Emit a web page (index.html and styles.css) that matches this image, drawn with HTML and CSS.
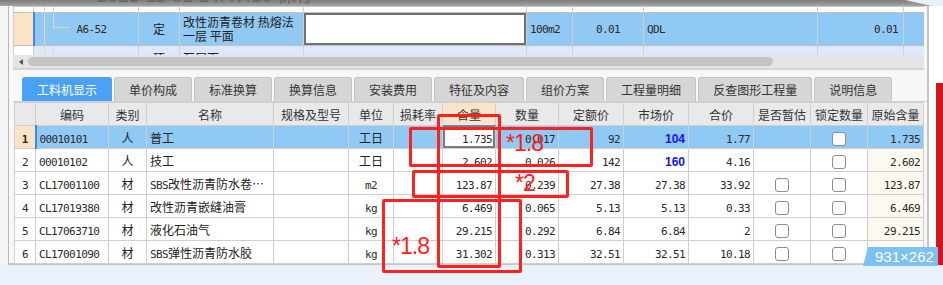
FILE: index.html
```html
<!DOCTYPE html>
<html lang="zh-CN">
<head>
  <meta charset="UTF-8" />
  <meta name="viewport" content="width=device-width, initial-scale=1.0"/>
  <title>工料机显示</title>
  <link rel="stylesheet" href="styles.css">
</head>
<body>
  <div class="page">
    <!-- 上方被截掉的标题栏 -->
    <div class="title-band"><span class="saved">2023-11-01 14:47:10 保存</span></div>

    <div class="middle">
      <div class="gutter"></div>

      <div class="window">
        <!-- 清单/定额表格（只露出一部分） -->
        <div class="upper">
          <table class="grid upper-grid">
            <colgroup>
              <col style="width:20px"><col style="width:105px"><col style="width:41px"><col style="width:124px">
              <col style="width:223px"><col style="width:46px"><col style="width:71px"><col style="width:174px">
              <col style="width:86px"><col style="width:21px">
            </colgroup>
            <tr class="row-prev">
              <td></td><td class="tree"></td><td></td><td></td><td></td><td></td><td></td><td></td><td></td><td></td>
            </tr>
            <tr class="row-cur">
              <td class="rn"></td>
              <td class="tree tree-end code-cell"><span class="mono">A6-52</span></td>
              <td class="c">定</td>
              <td class="name2">改性沥青卷材 热熔法<br>一层 平面</td>
              <td class="edit"></td>
              <td><span class="mono">100m2</span></td>
              <td class="c"><span class="mono">0.01</span></td>
              <td><span class="mono">QDL</span></td>
              <td class="r pad-r"><span class="mono">0.01</span></td>
              <td></td>
            </tr>
            <tr class="row-next">
              <td class="rn-plain"><span class="mono">53</span></td>
              <td class="tree code-cell"><span class="mono grey">010001001···</span></td>
              <td class="c">项</td>
              <td>瓦屋面</td>
              <td></td>
              <td><span class="mono">0</span></td>
              <td></td>
              <td><span class="mono">1</span></td>
              <td class="r pad-r"><span class="mono">1</span></td>
              <td></td>
            </tr>
          </table>
        </div>

        <div class="hscroll">
          <span class="arrow"></span>
          <span class="thumb"></span>
        </div>

        <div class="tabs">
          <div class="tab active">工料机显示</div>
          <div class="tab">单价构成</div>
          <div class="tab">标准换算</div>
          <div class="tab">换算信息</div>
          <div class="tab">安装费用</div>
          <div class="tab">特征及内容</div>
          <div class="tab">组价方案</div>
          <div class="tab">工程量明细</div>
          <div class="tab">反查图形工程量</div>
          <div class="tab">说明信息</div>
        </div>

        <!-- 工料机明细 -->
        <table class="grid lower-grid">
          <colgroup>
            <col style="width:21px"><col style="width:73px"><col style="width:38px"><col style="width:127px">
            <col style="width:75px"><col style="width:45px"><col style="width:49px"><col style="width:53px">
            <col style="width:63px"><col style="width:65px"><col style="width:65px"><col style="width:65px">
            <col style="width:57px"><col style="width:57px"><col style="width:56px">
          </colgroup>
          <tr class="head">
            <th></th><th>编码</th><th>类别</th><th>名称</th><th>规格及型号</th><th>单位</th><th>损耗率</th>
            <th class="hot">含量</th><th>数量</th><th>定额价</th><th>市场价</th><th>合价</th>
            <th>是否暂估</th><th>锁定数量</th><th>原始含量</th>
          </tr>
          <tr class="sel">
            <td class="rn c"><span class="mono b">1</span></td>
            <td class="first"><span class="mono">00010101</span></td>
            <td class="c">人</td>
            <td>普工</td>
            <td></td>
            <td class="c">工日</td>
            <td></td>
            <td class="r edit"><span class="mono">1.735</span></td>
            <td class="r"><span class="mono">0.017</span></td>
            <td class="r"><span class="mono">92</span></td>
            <td class="r"><span class="price">104</span></td>
            <td class="r"><span class="mono">1.77</span></td>
            <td></td>
            <td class="c"><span class="chk"></span></td>
            <td class="r"><span class="mono">1.735</span></td>
          </tr>
          <tr>
            <td class="c"><span class="mono">2</span></td>
            <td><span class="mono">00010102</span></td>
            <td class="c">人</td>
            <td>技工</td>
            <td></td>
            <td class="c">工日</td>
            <td></td>
            <td class="r"><span class="mono">2.602</span></td>
            <td class="r"><span class="mono">0.026</span></td>
            <td class="r"><span class="mono">142</span></td>
            <td class="r"><span class="price">160</span></td>
            <td class="r"><span class="mono">4.16</span></td>
            <td></td>
            <td class="c"><span class="chk"></span></td>
            <td class="r orig"><span class="mono">2.602</span></td>
          </tr>
          <tr>
            <td class="c"><span class="mono">3</span></td>
            <td><span class="mono">CL17001100</span></td>
            <td class="c">材</td>
            <td><span class="mono">SBS</span>改性沥青防水卷…</td>
            <td></td>
            <td class="c"><span class="mono">m2</span></td>
            <td></td>
            <td class="r"><span class="mono">123.87</span></td>
            <td class="r"><span class="mono">0.239</span></td>
            <td class="r"><span class="mono">27.38</span></td>
            <td class="r"><span class="mono">27.38</span></td>
            <td class="r"><span class="mono">33.92</span></td>
            <td class="c"><span class="chk"></span></td>
            <td class="c"><span class="chk"></span></td>
            <td class="r orig"><span class="mono">123.87</span></td>
          </tr>
          <tr>
            <td class="c"><span class="mono">4</span></td>
            <td><span class="mono">CL17019380</span></td>
            <td class="c">材</td>
            <td>改性沥青嵌缝油膏</td>
            <td></td>
            <td class="c"><span class="mono">kg</span></td>
            <td></td>
            <td class="r"><span class="mono">6.469</span></td>
            <td class="r"><span class="mono">0.065</span></td>
            <td class="r"><span class="mono">5.13</span></td>
            <td class="r"><span class="mono">5.13</span></td>
            <td class="r"><span class="mono">0.33</span></td>
            <td class="c"><span class="chk"></span></td>
            <td class="c"><span class="chk"></span></td>
            <td class="r orig"><span class="mono">6.469</span></td>
          </tr>
          <tr>
            <td class="c"><span class="mono">5</span></td>
            <td><span class="mono">CL17063710</span></td>
            <td class="c">材</td>
            <td>液化石油气</td>
            <td></td>
            <td class="c"><span class="mono">kg</span></td>
            <td></td>
            <td class="r"><span class="mono">29.215</span></td>
            <td class="r"><span class="mono">0.292</span></td>
            <td class="r"><span class="mono">6.84</span></td>
            <td class="r"><span class="mono">6.84</span></td>
            <td class="r"><span class="mono">2</span></td>
            <td class="c"><span class="chk"></span></td>
            <td class="c"><span class="chk"></span></td>
            <td class="r orig"><span class="mono">29.215</span></td>
          </tr>
          <tr>
            <td class="c"><span class="mono">6</span></td>
            <td><span class="mono">CL17001090</span></td>
            <td class="c">材</td>
            <td><span class="mono">SBS</span>弹性沥青防水胶</td>
            <td></td>
            <td class="c"><span class="mono">kg</span></td>
            <td></td>
            <td class="r"><span class="mono">31.302</span></td>
            <td class="r"><span class="mono">0.313</span></td>
            <td class="r"><span class="mono">32.51</span></td>
            <td class="r"><span class="mono">32.51</span></td>
            <td class="r"><span class="mono">10.18</span></td>
            <td class="c"><span class="chk"></span></td>
            <td class="c"><span class="chk"></span></td>
            <td class="r orig"><span class="mono">31.302</span></td>
          </tr>
        </table>
      </div>

      <div class="side">
        <div class="side-top"><span class="side-char">含</span></div>
        <div class="side-red"><span class="notch"></span></div>
      </div>
    </div>

    <div class="bottom"></div>

    <!-- 红色批注 -->
    <div class="mark mark-col"></div>
    <div class="mark mark-r12"></div>
    <div class="mark mark-r3"></div>
    <div class="mark mark-r456"></div>
    <div class="note note-1">*1.8</div>
    <div class="note note-2">*2</div>
    <div class="note note-3">*1.8</div>

    <div class="badge">931×262</div>
  </div>
</body>
</html>
```

FILE: styles.css
```css
html, body {
  margin: 0;
  padding: 0;
}

body {
  width: 943px;
  height: 285px;
  overflow: hidden;
  background: #eaf1fa;
  font-family: "Noto Sans CJK SC", sans-serif;
  font-size: 12px;
  color: #222;
}

.page {
  position: relative;
  width: 943px;
  height: 285px;
}

.title-band {
  height: 6px;
  overflow: hidden;
  background: linear-gradient(#7c7c7c, #a4a4a4);
  clip-path: polygon(0 0, 905px 0, 932px 100%, 0 100%);
}

.saved {
  display: block;
  margin: -15px 0 0 97px;
  font-family: "Liberation Sans", sans-serif;
  font-size: 19px;
  line-height: 22px;
  color: #666;
}

.middle {
  display: flex;
  height: 259px;
  background: #fff;
}

.gutter {
  width: 8px;
  background: #f4f5f7;
}

.window {
  width: 914px;
  padding-left: 4px;
  border-left: 1px solid #b8b8b8;
  border-right: 2px solid #c6c6c6;
  border-bottom: 2px solid #c6c6c6;
  background: #f7f7f7;
}

.side {
  width: 14px;
  display: flex;
  flex-direction: column;
  background: #fff;
}

.side-top {
  height: 77px;
  overflow: hidden;
}

.side-char {
  display: block;
  margin: 82px 0 0 9px;
  color: #999;
}

.side-red {
  flex: 1;
  margin-left: 7px;
  background: #d3141c;
}

.bottom {
  height: 20px;
}

/* 表格通用 */
.grid {
  border-collapse: collapse;
  table-layout: fixed;
  background: #fff;
}

.grid td, .grid th {
  padding: 0 3px;
  border: 1px solid #cfcfcf;
  white-space: nowrap;
  overflow: hidden;
  vertical-align: middle;
  text-align: left;
}

.mono {
  font-family: "DejaVu Sans Mono", monospace;
  font-size: 11px;
  letter-spacing: -0.6px;
  color: #2a2a2a;
}

.b {
  font-weight: bold;
}

.grey {
  color: #555;
}

.c { text-align: center !important; }
.r { text-align: right !important; }
.pad-r { padding-right: 5px !important; }

/* 上半部分 */
.upper {
  width: 911px;
  height: 49px;
  overflow: hidden;
  background: #fff;
}

.upper-grid {
  width: 911px;
}

.upper-grid td {
  border-top-color: #c2c2c2;
  border-bottom-color: #c2c2c2;
}

.row-prev td {
  height: 5px;
  line-height: 0;
}

.row-cur td {
  height: 32px;
  background: #91c9f5;
  line-height: 14px;
}

.row-cur td.rn {
  background: #fde3c6;
}

.row-next td {
  height: 22px;
  background: #dde9fb;
}

.row-next td.rn-plain {
  background: #fff;
  text-align: center;
}

/* 树形连线 */
.upper-grid td.tree {
  background-image:
    linear-gradient(#f6d2a8, #f6d2a8),
    linear-gradient(#f6d2a8, #f6d2a8);
  background-repeat: no-repeat;
  background-position: 10px 0, 19px 0;
  background-size: 1px 100%, 1px 100%;
}

.upper-grid tr.row-cur td.tree-end {
  border-left: 2px solid #3a8de2;
  background-image:
    linear-gradient(#f6d2a8, #f6d2a8),
    linear-gradient(#f6d2a8, #f6d2a8),
    linear-gradient(#f6d2a8, #f6d2a8);
  background-repeat: no-repeat;
  background-position: 9px 0, 18px 0, 18px 14px;
  background-size: 1px 100%, 1px 15px, 16px 1px;
}

.code-cell {
  padding-left: 42px !important;
}

.row-next .code-cell {
  padding-left: 30px !important;
}

.name2 {
  white-space: normal !important;
}

.row-cur .edit {
  background: #fff;
  box-shadow: inset 0 0 0 2px #707070;
}

/* 横向滚动条 */
.hscroll {
  display: flex;
  align-items: center;
  width: 911px;
  height: 13px;
  background: #e4e4e4;
  border-bottom: 2px solid #d5d5d5;
}

.arrow {
  width: 0;
  height: 0;
  margin-left: 6px;
  border-top: 3px solid transparent;
  border-bottom: 3px solid transparent;
  border-right: 4px solid #555;
}

.thumb {
  width: 745px;
  height: 9px;
  margin-left: 5px;
  border-radius: 5px;
  background: #c4c4c4;
}

/* 页签 */
.tabs {
  display: flex;
  gap: 2px;
  height: 24px;
  margin-top: 7px;
  padding-left: 9px;
  border-bottom: 1px solid #d0d0d0;
}

.tab {
  padding: 0 14px;
  line-height: 23px;
  background: #d6d6d6;
  border: 1px solid #c4c4c4;
  border-bottom: none;
  border-radius: 3px 3px 0 0;
  color: #333;
}

.tab.active {
  background: #4ba1f6;
  border-color: #4ba1f6;
  color: #fff;
}

/* 工料机表格 */
.lower-grid {
  width: 910px;
  margin-left: 1px;
}

.lower-grid th {
  height: 22px;
  background: #e9e9e9;
  font-weight: normal;
  text-align: center;
  color: #333;
}

.lower-grid th.hot {
  background: #fde4c6;
  border-bottom: 1px solid #4a90e2;
}

.lower-grid td {
  height: 22px;
}

.lower-grid tr.sel td {
  background: #91c9f5;
}

.lower-grid tr.sel td.rn {
  background: #fde3c6;
}

.lower-grid tr.sel td.first {
  border-left: 2px solid #3a8de2;
}

.lower-grid tr.sel td.edit {
  background: #fff;
  box-shadow: inset 0 0 0 2px #7a7a7a;
}

.lower-grid td.orig {
  background: #fdf9f1;
}

.price {
  font-family: "Liberation Sans", sans-serif;
  font-weight: bold;
  font-size: 12px;
  color: #1212f0;
}

.chk {
  display: inline-block;
  width: 12px;
  height: 12px;
  border: 1px solid #8c8c8c;
  border-radius: 3px;
  background: #fff;
  vertical-align: middle;
}

/* 红色批注（覆盖在截图上） */
.mark {
  position: absolute;
  border: 3px solid #ff2020;
  border-radius: 2px;
  box-sizing: border-box;
}

.mark-col  { left: 437px; top: 114px; width: 64px;  height: 154px; }
.mark-r12  { left: 409px; top: 127px; width: 184px; height: 40px; }
.mark-r3   { left: 412px; top: 170px; width: 157px; height: 28px; }
.mark-r456 { left: 382px; top: 199px; width: 140px; height: 74px; }

.note {
  position: absolute;
  font-family: "Liberation Sans", sans-serif;
  font-size: 23px;
  line-height: 23px;
  letter-spacing: -1px;
  color: #ff2020;
}

.note-1 { left: 506px; top: 132px; }
.note-2 { left: 515px; top: 172px; }
.note-3 { left: 392px; top: 235px; }

.badge {
  position: absolute;
  left: 863px;
  top: 247px;
  width: 75px;
  height: 19px;
  padding-left: 12px;
  box-sizing: border-box;
  background: #7cc2f0;
  clip-path: polygon(5px 0, 100% 0, 100% 100%, 0 100%);
  font-family: "Liberation Sans", sans-serif;
  font-size: 15px;
  line-height: 19px;
  color: #fff;
}
```
